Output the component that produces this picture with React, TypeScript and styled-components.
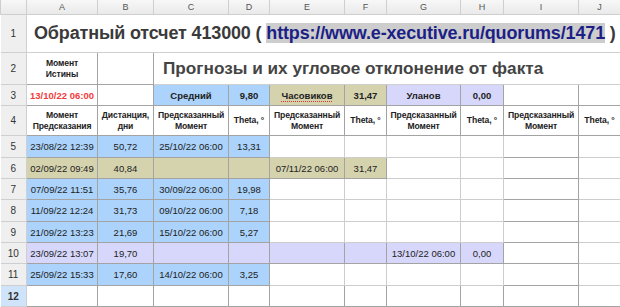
import styled, { createGlobalStyle } from "styled-components";

const GlobalStyle = createGlobalStyle`
  html, body {
    margin: 0;
    padding: 0;
    background: #ffffff;
    overflow: hidden;
  }
  body {
    font-family: "Liberation Sans", Arial, sans-serif;
  }
`;

type Fill = "blue" | "khaki" | "lilac" | "none";

const fills: Record<Fill, string> = {
  blue: "#abd3fb",
  khaki: "#d5d3ae",
  lilac: "#d7d7fb",
  none: "#ffffff",
};

const colWidths = [26, 71, 56, 75, 41, 75, 42, 74, 43, 75, 42];
const letters = ["A", "B", "C", "D", "E", "F", "G", "H", "I", "J"];

const Sheet = styled.table`
  border-collapse: collapse;
  table-layout: fixed;
  width: ${colWidths.reduce((a, b) => a + b, 0)}px;
  font-family: "Liberation Sans", Arial, sans-serif;
`;

const ColHead = styled.th`
  height: 14px;
  padding: 0;
  font-size: 9px;
  font-weight: normal;
  color: #555;
  background: linear-gradient(#f7f7f7, #e9e9e9);
  border: 1px solid #cfcfcf;
  border-top: none;
  text-align: center;
`;

const RowHead = styled.th<{ $active?: boolean }>`
  padding: 0;
  font-size: 10px;
  font-weight: ${(p) => (p.$active ? "bold" : "normal")};
  color: #333;
  background: ${(p) => (p.$active ? "#cfe4fb" : "#efefef")};
  border: 1px solid #cfcfcf;
  border-left: none;
  text-align: center;
`;

const Row = styled.tr<{ $h: number }>`
  height: ${(p) => p.$h}px;
`;

const Cell = styled.td<{ $fill?: Fill; $bold?: boolean; $dark?: boolean }>`
  padding: 0 1px;
  font-size: 9.5px;
  font-weight: ${(p) => (p.$bold ? "bold" : "normal")};
  color: #222;
  text-align: center;
  white-space: nowrap;
  overflow: hidden;
  background: ${(p) => fills[p.$fill || "none"]};
  border: 1px solid ${(p) => (p.$dark ? "#a3a3a3" : "#cdcdcd")};
`;

const HeadCell = styled(Cell)`
  font-size: 8.6px;
  font-weight: bold;
  line-height: 11px;
  letter-spacing: -0.1px;
  white-space: normal;
  padding: 0;
`;

const TitleCell = styled.td`
  padding: 0 0 0 7px;
  border: 1px solid #cfcfcf;
  font-size: 18px;
  letter-spacing: -0.15px;
  font-weight: bold;
  color: #3a3a3a;
  white-space: nowrap;
  overflow: hidden;
`;

const Link = styled.span`
  color: #1c1f86;
  background: #cdcdcd;
`;

const SubTitle = styled.td`
  padding: 0 0 0 9px;
  border: 1px solid #cfcfcf;
  font-size: 17.2px;
  font-weight: bold;
  color: #444;
  white-space: nowrap;
`;

const Red = styled(Cell)`
  color: #f23c3c;
  font-weight: bold;
`;

const Spell = styled.span`
  text-decoration: underline dotted #e23030;
  text-underline-offset: 2px;
`;

type DataRow = {
  n: number;
  h: number;
  fill: Fill;
  vals: string[];
  extra: number[];
};

const rows: DataRow[] = [
  { n: 5, h: 22, fill: "blue", vals: ["23/08/22 12:39", "50,72", "25/10/22 06:00", "13,31"], extra: [] },
  { n: 6, h: 21, fill: "khaki", vals: ["02/09/22 09:49", "40,84", "", "", "07/11/22 06:00", "31,47"], extra: [4, 5] },
  { n: 7, h: 21, fill: "blue", vals: ["07/09/22 11:51", "35,76", "30/09/22 06:00", "19,98"], extra: [] },
  { n: 8, h: 22, fill: "blue", vals: ["11/09/22 12:24", "31,73", "09/10/22 06:00", "7,18"], extra: [] },
  { n: 9, h: 21, fill: "blue", vals: ["21/09/22 13:23", "21,69", "15/10/22 06:00", "5,27"], extra: [] },
  { n: 10, h: 21, fill: "lilac", vals: ["23/09/22 13:07", "19,70", "", "", "", "", "13/10/22 06:00", "0,00"], extra: [4, 5, 6, 7] },
  { n: 11, h: 22, fill: "blue", vals: ["25/09/22 15:33", "17,60", "14/10/22 06:00", "3,25"], extra: [] },
];

function DataLine({ r }: { r: DataRow }) {
  return (
    <Row $h={r.h}>
      <RowHead>{r.n}</RowHead>
      {letters.map((l, i) => {
        const on = i < 4 || r.extra.includes(i);
        return (
          <Cell key={l} $fill={on ? r.fill : "none"} $dark={on || i === 8}>
            {r.vals[i] || ""}
          </Cell>
        );
      })}
    </Row>
  );
}

export default function App() {
  return (
    <>
      <GlobalStyle />
      <Sheet>
        <colgroup>
          {colWidths.map((w, i) => (
            <col key={i} style={{ width: w }} />
          ))}
        </colgroup>
        <thead>
          <tr>
            <ColHead />
            {letters.map((l) => (
              <ColHead key={l}>{l}</ColHead>
            ))}
          </tr>
        </thead>
        <tbody>
          <Row $h={38}>
            <RowHead>1</RowHead>
            <TitleCell colSpan={10}>
              Обратный отсчет 413000 ( <Link>https://www.e-xecutive.ru/quorums/1471</Link> )
            </TitleCell>
          </Row>
          <Row $h={32}>
            <RowHead>2</RowHead>
            <HeadCell $dark>
              Момент
              <br />
              Истины
            </HeadCell>
            <Cell $dark />
            <SubTitle colSpan={8}>Прогнозы и их угловое отклонение от факта</SubTitle>
          </Row>
          <Row $h={21}>
            <RowHead>3</RowHead>
            <Red $dark>13/10/22 06:00</Red>
            <Cell $dark />
            <Cell $fill="blue" $bold $dark>Средний</Cell>
            <Cell $fill="blue" $bold $dark>9,80</Cell>
            <Cell $fill="khaki" $bold $dark>
              <Spell>Часовиков</Spell>
            </Cell>
            <Cell $fill="khaki" $bold $dark>31,47</Cell>
            <Cell $fill="lilac" $bold $dark>Уланов</Cell>
            <Cell $fill="lilac" $bold $dark>0,00</Cell>
            <Cell $dark />
            <Cell $dark />
          </Row>
          <Row $h={30}>
            <RowHead>4</RowHead>
            <HeadCell $dark>Момент Предсказания</HeadCell>
            <HeadCell $dark>Дистанция, дни</HeadCell>
            <HeadCell $dark>Предсказанный Момент</HeadCell>
            <HeadCell $dark>Theta, °</HeadCell>
            <HeadCell $dark>Предсказанный Момент</HeadCell>
            <HeadCell $dark>Theta, °</HeadCell>
            <HeadCell $dark>Предсказанный Момент</HeadCell>
            <HeadCell $dark>Theta, °</HeadCell>
            <HeadCell $dark>Предсказанный Момент</HeadCell>
            <HeadCell $dark>Theta, °</HeadCell>
          </Row>
          {rows.map((r) => (
            <DataLine key={r.n} r={r} />
          ))}
          <Row $h={21}>
            <RowHead $active>12</RowHead>
            {letters.map((l) => (
              <Cell key={l} $dark />
            ))}
          </Row>
        </tbody>
      </Sheet>
    </>
  );
}
